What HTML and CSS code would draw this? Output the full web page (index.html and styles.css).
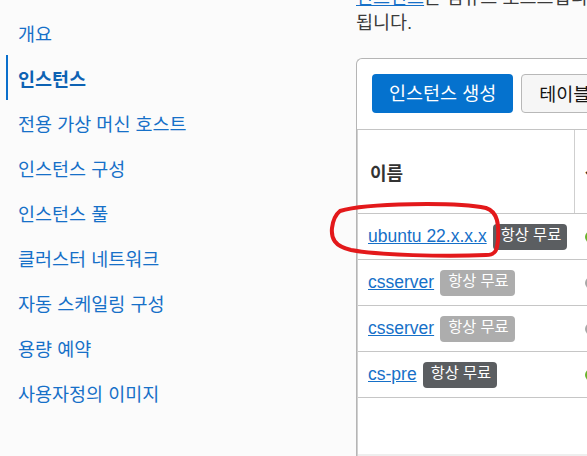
FILE: index.html
```html
<!DOCTYPE html>
<html lang="ko">
<head>
<meta charset="utf-8">
<link rel="stylesheet" href="styles.css">
</head>
<body>
<div class="layout">
  <nav class="sidebar">
    <a class="nav-item">개요</a>
    <a class="nav-item active">인스턴스</a>
    <a class="nav-item">전용 가상 머신 호스트</a>
    <a class="nav-item">인스턴스 구성</a>
    <a class="nav-item">인스턴스 풀</a>
    <a class="nav-item">클러스터 네트워크</a>
    <a class="nav-item">자동 스케일링 구성</a>
    <a class="nav-item">용량 예약</a>
    <a class="nav-item">사용자정의 이미지</a>
  </nav>
  <main class="main">
    <p class="desc"><a class="desc-link">인스턴스</a>는 컴퓨트 호스트입니다. 인스턴스를 사용하면<br>됩니다.</p>
    <section class="panel">
      <div class="toolbar">
        <button class="btn btn-primary">인스턴스 생성</button>
        <button class="btn btn-secondary">테이블 설정</button>
      </div>
      <div class="table">
        <div class="row head">
          <div class="cell name-cell">이름</div>
          <div class="cell state-cell">상태</div>
        </div>
        <div class="row">
          <div class="cell name-cell"><a class="link">ubuntu 22.x.x.x</a><span class="badge dark">항상 무료</span></div>
          <div class="cell state-cell"><span class="dot green"></span></div>
        </div>
        <div class="row">
          <div class="cell name-cell"><a class="link">csserver</a><span class="badge light">항상 무료</span></div>
          <div class="cell state-cell"><span class="dot gray"></span></div>
        </div>
        <div class="row">
          <div class="cell name-cell"><a class="link">csserver</a><span class="badge light">항상 무료</span></div>
          <div class="cell state-cell"><span class="dot gray"></span></div>
        </div>
        <div class="row">
          <div class="cell name-cell"><a class="link">cs-pre</a><span class="badge dark">항상 무료</span></div>
          <div class="cell state-cell"><span class="dot green"></span></div>
        </div>
        <div class="spacer"></div>
        <div class="footer"></div>
      </div>
    </section>
  </main>
</div>
<svg class="annotation" width="180" height="64" viewBox="0 0 180 64">
  <path d="M14 11 C 40 3, 130 2, 160 8 C 172 12, 173 25, 172 40 C 171 50, 170 55, 160 55 C 120 57, 50 55, 25 50 C 8 46, 5 38, 6 28 C 7 20, 9 15, 14 11 Z" fill="none" stroke="#e3191b" stroke-width="4" stroke-linejoin="round"/>
</svg>
</body>
</html>
```

FILE: styles.css
```css
html, body {
  margin: 0;
  padding: 0;
  overflow: hidden;
}
body {
  position: relative;
  width: 587px;
  height: 456px;
  background: #fbfbfb;
  font-family: "Liberation Sans", "Noto Sans CJK KR", sans-serif;
  color: #3a3a3a;
}
.layout {
  display: grid;
  grid-template-columns: 356px 1fr;
  height: 456px;
}
.sidebar {
  display: flex;
  flex-direction: column;
  padding-top: 10px;
  padding-left: 6px;
}
.nav-item {
  display: flex;
  align-items: center;
  height: 45px;
  padding-left: 10px;
  border-left: 2px solid transparent;
  font-size: 18.5px;
  color: #1670c8;
}
.nav-item.active {
  border-left-color: #0a6fcc;
  font-weight: 700;
  color: #0d62b3;
}
.main {
  overflow: hidden;
  min-width: 0;
}
.desc {
  margin: -15px 0 0 0;
  font-size: 18.5px;
  line-height: 25px;
  white-space: nowrap;
  color: #3b3b3b;
}
.desc-link {
  color: #1670c8;
  text-decoration: underline;
}
.panel {
  margin-top: 23px;
  width: 600px;
  background: #fff;
  border: 1px solid #b5b5b5;
  border-right: none;
  border-bottom: none;
  border-top-left-radius: 6px;
  height: 420px;
}
.toolbar {
  display: flex;
  gap: 8px;
  padding: 15px 15px 16px 15px;
  border-bottom: 1px solid #c4c4c4;
}
.btn {
  font-family: "Liberation Sans", "Noto Sans CJK KR", sans-serif;
  font-size: 18.5px;
  line-height: 23px;
  padding: 8px 17px;
  border-radius: 4px;
  height: 39px;
}
.btn-primary {
  background: #0572ce;
  color: #fff;
  border: none;
}
.btn-secondary {
  background: #f6f6f6;
  color: #161513;
  border: 1px solid #b8b8b8;
}
.table {
  border-left: 1px solid #d0d0d0;
}
.row {
  display: grid;
  grid-template-columns: 216px 1fr;
  height: 45px;
  border-bottom: 1px solid #c6c6c6;
}
.row.head {
  height: 83px;
}
.cell {
  display: flex;
  align-items: center;
}
.name-cell {
  padding-left: 10px;
  gap: 6px;
}
.head .name-cell {
  padding-left: 12px;
  font-size: 18px;
  font-weight: 700;
  color: #333;
}
.head .state-cell {
  border-left: 1px solid #cfcfcf;
  padding-left: 10px;
  font-size: 18px;
  font-weight: 700;
  color: #333;
}
.state-cell {
  padding-left: 11px;
}
.link {
  font-size: 17.5px;
  color: #1670c8;
  text-decoration: underline;
}
.badge {
  display: inline-block;
  font-size: 15.3px;
  line-height: 21px;
  padding: 0 6px 5px 8px;
  border-radius: 4px;
  color: #fff;
}
.badge.dark {
  background: #5b5e61;
}
.badge.light {
  background: #adadad;
}
.dot {
  display: inline-block;
  width: 12px;
  height: 12px;
  border-radius: 50%;
}
.dot.green {
  background: #6ab42d;
}
.dot.gray {
  background: #a8a8a8;
}
.spacer {
  height: 56px;
}
.footer {
  height: 40px;
  background: #eeeeee;
}
.annotation {
  position: absolute;
  left: 326px;
  top: 200px;
  pointer-events: none;
}
```
